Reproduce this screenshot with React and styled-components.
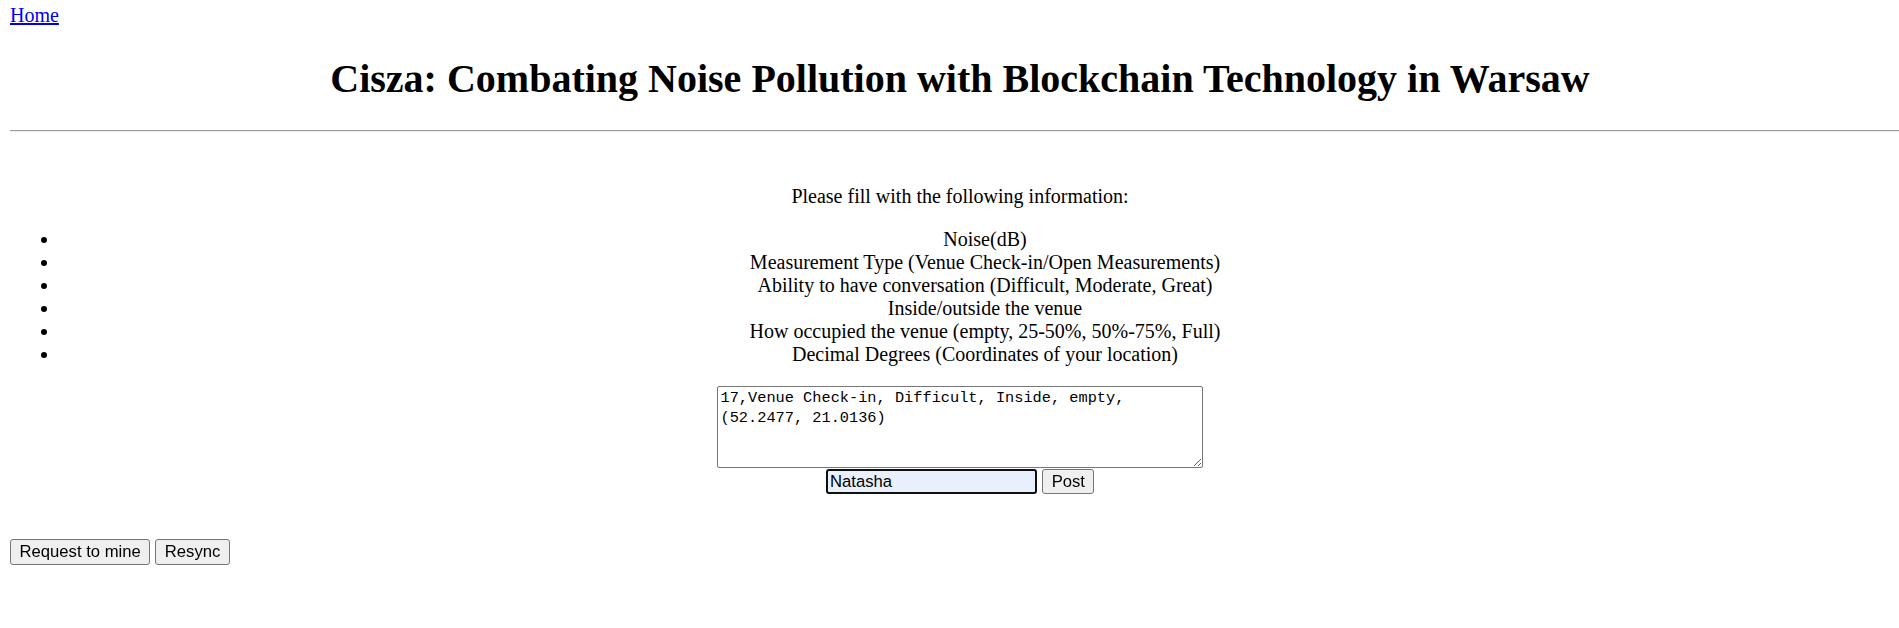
import styled, { createGlobalStyle } from "styled-components";

const GlobalStyle = createGlobalStyle`
  html {
    overflow: hidden;
  }
  body {
    margin: 0;
    background: #fff;
    color: #000;
    font-family: "Liberation Serif", "Times New Roman", serif;
    font-size: 20px;
  }
`;

const Page = styled.div`
  width: 1900px;
  padding: 4px 10px 40px;
`;

const Nav = styled.div`
  line-height: 23px;
`;

const HomeLink = styled.a`
  color: #0000ee;
  text-decoration: underline;
`;

const Title = styled.h1`
  margin: 28.5px 0 28px;
  font-size: 40px;
  line-height: 46px;
  font-weight: bold;
  text-align: center;
`;

const Rule = styled.hr`
  margin: 0;
  height: 0;
  border: none;
  border-top: 1px solid #9a9a9a;
  border-bottom: 1px solid #eeeeee;
`;

const FormSection = styled.div`
  display: flex;
  flex-direction: column;
  align-items: center;
  padding-top: 53px;
`;

const Intro = styled.p`
  margin: 0;
  line-height: 23px;
`;

const FieldList = styled.ul`
  align-self: stretch;
  margin: 20px 0;
  padding-left: 50px;
  text-align: center;
  list-style: disc outside;
`;

const FieldItem = styled.li`
  line-height: 23px;
`;

const Entry = styled.textarea`
  box-sizing: border-box;
  width: 486px;
  height: 82px;
  margin: 0;
  padding: 2.5px;
  border: 1px solid #767676;
  border-radius: 2px;
  font-family: "Liberation Mono", "Courier New", monospace;
  font-size: 15.3px;
  line-height: 19.5px;
  color: #000;
  background: #fff;
  outline: none;
`;

const PostRow = styled.div`
  display: flex;
  gap: 5.6px;
  margin-top: 1.5px;
`;

const NameInput = styled.input`
  box-sizing: border-box;
  width: 211px;
  height: 25px;
  margin: 0;
  padding: 0 2.5px;
  border: 2px solid #101010;
  border-radius: 3px;
  background: #e8f0fe;
  font-family: "Liberation Sans", Arial, sans-serif;
  font-size: 16.67px;
  color: #000;
  outline: none;
`;

const Button = styled.button`
  box-sizing: border-box;
  height: ${(p) => (p.$tall ? "26px" : "25px")};
  margin: 0;
  padding: 0 8.5px;
  border: 1px solid #767676;
  border-radius: 3px;
  background: #efefef;
  font-family: "Liberation Sans", Arial, sans-serif;
  font-size: 16.67px;
  color: #000;
`;

const Actions = styled.div`
  display: flex;
  gap: 5px;
  margin-top: 44.5px;
`;

const fields = [
  "Noise(dB)",
  "Measurement Type (Venue Check-in/Open Measurements)",
  "Ability to have conversation (Difficult, Moderate, Great)",
  "Inside/outside the venue",
  "How occupied the venue (empty, 25-50%, 50%-75%, Full)",
  "Decimal Degrees (Coordinates of your location)",
];

const App = () => {
  return (
    <Page>
      <GlobalStyle />
      <Nav>
        <HomeLink href="#">Home</HomeLink>
      </Nav>
      <Title>Cisza: Combating Noise Pollution with Blockchain Technology in Warsaw</Title>
      <Rule />
      <FormSection>
        <Intro>Please fill with the following information:</Intro>
        <FieldList>
          {fields.map((field) => (
            <FieldItem key={field}>{field}</FieldItem>
          ))}
        </FieldList>
        <Entry
          spellCheck={false}
          defaultValue="17,Venue Check-in, Difficult, Inside, empty, (52.2477, 21.0136)"
        />
        <PostRow>
          <NameInput defaultValue="Natasha " autoFocus />
          <Button>Post</Button>
        </PostRow>
      </FormSection>
      <Actions>
        <Button $tall>Request to mine</Button>
        <Button $tall>Resync</Button>
      </Actions>
    </Page>
  );
};

export default App;
